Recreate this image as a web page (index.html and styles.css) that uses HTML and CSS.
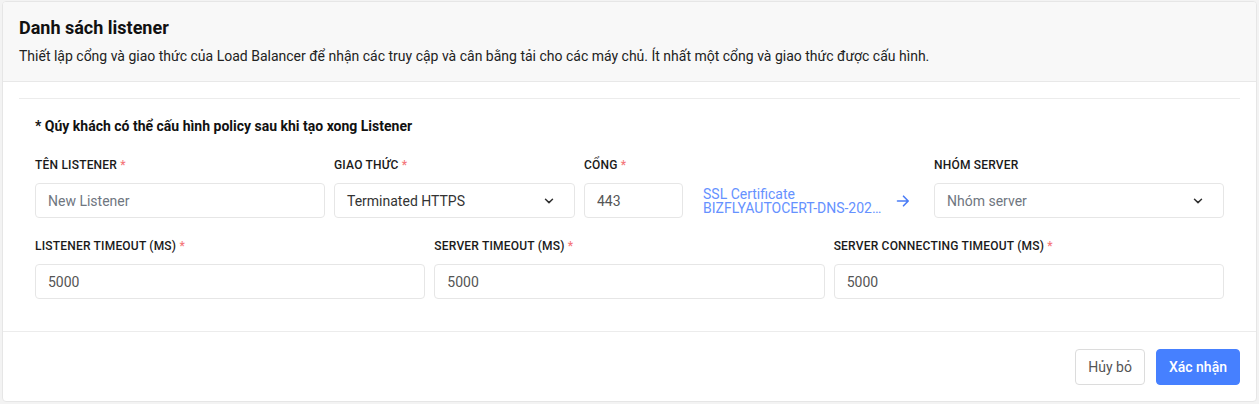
FILE: index.html
```html
<!DOCTYPE html>
<html lang="vi">
<head>
    <meta charset="utf-8">
    <title>Danh sách listener</title>
    <link rel="stylesheet" href="styles.css">
</head>
<body>
    <div class="card">
        <div class="card-header">
            <h2 class="card-title">Danh sách listener</h2>
            <p class="card-desc">Thiết lập cổng và giao thức của Load Balancer để nhận các truy cập và cân bằng tải cho các máy chủ. Ít nhất một cổng và giao thức được cấu hình.</p>
        </div>

        <div class="card-body">
            <div class="divider"></div>
            <div class="form-wrap">
                <p class="note">* Qúy khách có thể cấu hình policy sau khi tạo xong Listener</p>

                <div class="row row-main">
                    <div class="field">
                        <label class="label">Tên listener <span class="req">*</span></label>
                        <input class="input" type="text" placeholder="New Listener">
                    </div>
                    <div class="field">
                        <label class="label">Giao thức <span class="req">*</span></label>
                        <div class="select">
                            <span class="select-value">Terminated HTTPS</span>
                            <svg class="chevron" width="10" height="6" viewBox="0 0 10 6"><path d="M1.5 1.2 5 4.6l3.5-3.4" fill="none" stroke="#333" stroke-width="1.5" stroke-linecap="round" stroke-linejoin="round"/></svg>
                        </div>
                    </div>
                    <div class="field">
                        <label class="label">Cổng <span class="req">*</span></label>
                        <div class="port-line">
                            <input class="input port" type="text" value="443">
                            <a class="ssl-link" href="#">
                                <span>SSL Certificate</span>
                                <span class="ellipsis">BIZFLYAUTOCERT-DNS-20231120</span>
                            </a>
                            <svg class="arrow" width="14" height="14" viewBox="0 0 14 14"><path d="M1.5 7h10.5M7.5 2.2 12.2 7 7.5 11.8" fill="none" stroke="#4a7cf6" stroke-width="1.6" stroke-linecap="round" stroke-linejoin="round"/></svg>
                        </div>
                    </div>
                    <div class="field">
                        <label class="label">Nhóm server</label>
                        <div class="select">
                            <span class="select-value placeholder">Nhóm server</span>
                            <svg class="chevron" width="10" height="6" viewBox="0 0 10 6"><path d="M1.5 1.2 5 4.6l3.5-3.4" fill="none" stroke="#333" stroke-width="1.5" stroke-linecap="round" stroke-linejoin="round"/></svg>
                        </div>
                    </div>
                </div>

                <div class="row row-timeout">
                    <div class="field">
                        <label class="label">Listener timeout (ms) <span class="req">*</span></label>
                        <input class="input" type="text" value="5000">
                    </div>
                    <div class="field">
                        <label class="label">Server timeout (ms) <span class="req">*</span></label>
                        <input class="input" type="text" value="5000">
                    </div>
                    <div class="field">
                        <label class="label">Server connecting timeout (ms) <span class="req">*</span></label>
                        <input class="input" type="text" value="5000">
                    </div>
                </div>
            </div>
        </div>

        <div class="card-footer">
            <button class="btn btn-default">Hủy bỏ</button>
            <button class="btn btn-primary">Xác nhận</button>
        </div>
    </div>
</body>
</html>
```

FILE: styles.css
```css
body {
margin: 0;
background-color: #f3f3f3;
font-family: Roboto, "Liberation Sans", sans-serif;
color: #1f1f1f;
}

.card {
margin: 1px 2px;
background-color: #fff;
border: 1px solid #e6e6e6;
border-radius: 4px;
overflow: hidden;
}

.card-header {
background-color: #f8f8f8;
padding: 14px 16px 15px;
border-bottom: 1px solid #e8e8e8;
}

.card-title {
margin: 0;
font-size: 18px;
line-height: 24px;
font-weight: 700;
color: #111;
}

.card-desc {
margin: 6px 0 0;
font-size: 14px;
line-height: 20px;
color: #222;
}

.card-body {
padding: 16px 16px 32px;
}

.divider {
height: 1px;
background-color: #ececec;
}

.form-wrap {
padding: 0 16px;
}

.note {
margin: 17px 0 0;
font-size: 14px;
line-height: 20px;
font-weight: 700;
color: #111;
}

.row {
display: grid;
column-gap: 9px;
}

.row-main {
grid-template-columns: 290px 241px 1fr 290px;
margin-top: 20px;
}

.row-timeout {
grid-template-columns: 1fr 1fr 1fr;
margin-top: 19px;
}

.field {
display: flex;
flex-direction: column;
min-width: 0;
}

.label {
display: block;
font-size: 12px;
line-height: 16px;
font-weight: 500;
text-transform: uppercase;
letter-spacing: 0.2px;
color: #1a1a1a;
margin: 1px 0 10px;
}

.req {
color: #f4777b;
}

.input, .select {
box-sizing: border-box;
height: 35px;
width: 100%;
border: 1px solid #e6e6e6;
border-radius: 4px;
padding: 0 12px;
font-family: Roboto, "Liberation Sans", sans-serif;
font-size: 14px;
color: #555;
background-color: #fff;
outline: none;
}

.input::placeholder {
color: #6f7680;
}

.select {
display: flex;
align-items: center;
justify-content: space-between;
padding-right: 20px;
}

.select-value {
color: #333;
}

.select-value.placeholder {
color: #6f7680;
}

.chevron {
display: block;
}

.port-line {
display: flex;
align-items: center;
}

.input.port {
width: 99px;
flex: none;
}

.ssl-link {
display: flex;
flex-direction: column;
margin-left: 20px;
width: 180px;
font-size: 14px;
line-height: 14px;
color: #6591ff;
text-decoration: none;
}

.ellipsis {
white-space: nowrap;
overflow: hidden;
text-overflow: ellipsis;
}

.arrow {
margin-left: 13px;
flex: none;
}

.card-footer {
display: flex;
justify-content: flex-end;
gap: 11px;
padding: 17px 16px 16px;
border-top: 1px solid #ececec;
}

.btn {
height: 36px;
border-radius: 4px;
font-family: Roboto, "Liberation Sans", sans-serif;
font-size: 14px;
padding: 0 12px;
cursor: pointer;
}

.btn-default {
background-color: #fff;
border: 1px solid #dcdcdc;
color: #555;
}

.btn-primary {
background-color: #4680ff;
border: 1px solid #4680ff;
color: #fff;
font-weight: 500;
}
```
